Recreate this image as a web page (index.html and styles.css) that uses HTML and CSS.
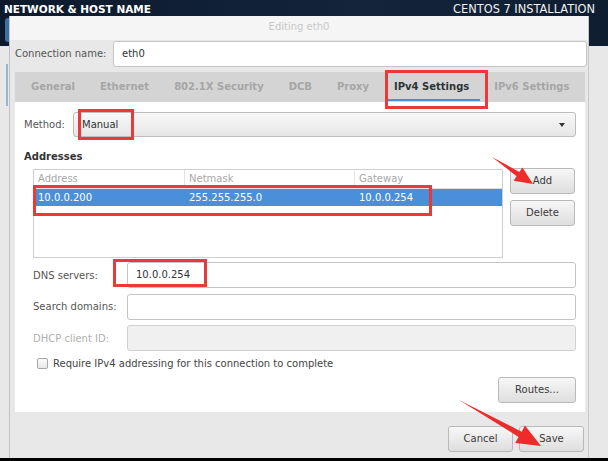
FILE: index.html
```html
<!DOCTYPE html>
<html lang="en">
<head>
    <meta charset="UTF-8">
    <title>Network &amp; Host Name - Editing eth0</title>
    <link rel="stylesheet" href="styles.css">
</head>
<body>
    <header class="topbar">
        <div class="spoke-title">NETWORK &amp; HOST NAME</div>
        <div class="product">CENTOS 7 INSTALLATION</div>
    </header>
    <div class="done-btn"></div>
    <div class="side-line"></div>

    <div class="dialog">
        <div class="dlg-title">Editing eth0</div>

        <div class="conn-row">
            <span class="lbl">Connection name:</span>
            <div class="entry">eth0</div>
        </div>

        <div class="tabs">
            <span class="tab">General</span>
            <span class="tab">Ethernet</span>
            <span class="tab">802.1X Security</span>
            <span class="tab">DCB</span>
            <span class="tab">Proxy</span>
            <span class="tab active">IPv4 Settings</span>
            <span class="tab">IPv6 Settings</span>
        </div>

        <div class="page">
            <div class="method-row">
                <span class="lbl">Method:</span>
                <div class="combo">
                    <span>Manual</span>
                    <span class="caret"></span>
                </div>
            </div>

            <div class="section-title">Addresses</div>
            <div class="addr-block">
                <div class="addr-table">
                    <div class="row head">
                        <span>Address</span><span>Netmask</span><span>Gateway</span>
                    </div>
                    <div class="row selected">
                        <span>10.0.0.200</span><span>255.255.255.0</span><span>10.0.0.254</span>
                    </div>
                </div>
                <div class="addr-buttons">
                    <div class="btn">Add</div>
                    <div class="btn">Delete</div>
                </div>
            </div>

            <div class="fields">
                <span class="lbl">DNS servers:</span>
                <div class="entry">10.0.0.254</div>
                <span class="lbl">Search domains:</span>
                <div class="entry"></div>
                <span class="lbl dim">DHCP client ID:</span>
                <div class="entry disabled"></div>
            </div>

            <div class="check-row">
                <span class="checkbox"></span>
                <span>Require IPv4 addressing for this connection to complete</span>
            </div>

            <div class="routes-row">
                <div class="btn routes">Routes...</div>
            </div>
        </div>

        <div class="actions">
            <div class="btn">Cancel</div>
            <div class="btn">Save</div>
        </div>
    </div>

    <div class="bottom-bar"></div>

    <!-- annotations drawn on top of the screenshot -->
    <div class="mark mark-tab"></div>
    <div class="mark mark-method"></div>
    <div class="mark mark-row"></div>
    <div class="mark mark-dns"></div>
    <svg class="arrows" width="608" height="461" viewBox="0 0 608 461">
        <polygon points="492,157 519.4,172 522.4,167.4 533,184 513.6,180.8 516.6,176.2" fill="#ee2b2b"/>
        <polygon points="459,400 521.6,431.7 525,425.6 541,446 515.2,443 518.6,436.9" fill="#ee2b2b"/>
    </svg>
</body>
</html>
```

FILE: styles.css
```css
body {
    margin: 0;
    width: 608px;
    height: 461px;
    position: relative;
    overflow: hidden;
    background: #e8e8e8;
    font-family: 'DejaVu Sans', sans-serif;
    font-size: 10px;
    color: #333;
}
.topbar {
    height: 46px;
    display: flex;
    justify-content: space-between;
    align-items: flex-start;
    padding: 3px 13px 0 4px;
    box-sizing: border-box;
    background: linear-gradient(to right, #0d1a2c, #13243b 60%, #0f1d31);
    color: #fff;
}
.spoke-title {
    font-weight: bold;
    font-size: 10.5px;
    line-height: 13px;
}
.product {
    font-size: 11.4px;
    line-height: 13px;
    color: #f2f2f2;
}
.done-btn {
    position: absolute;
    left: 5px;
    top: 18px;
    width: 8px;
    height: 24px;
    background: #3d6fa8;
    border-radius: 3px 0 0 3px;
}
.side-line {
    position: absolute;
    left: 6px;
    top: 64px;
    width: 2px;
    height: 42px;
    background: #9fb4cc;
}

/* dialog window */
.dialog {
    position: absolute;
    left: 9px;
    top: 16px;
    width: 580px;
    height: 442px;
    box-sizing: border-box;
    padding: 0 3px 0 5px;
    background: #e8e8e8;
    border-left: 1px solid #c2c2c2;
    border-right: 1px solid #c8c8c8;
    display: flex;
    flex-direction: column;
}
.dlg-title {
    height: 24px;
    margin: 0 -3px 0 -5px;
    background: #f5f5f5;
    color: #c8c8c8;
    text-align: center;
    line-height: 22px;
}
.lbl {
    color: #555;
}
.lbl.dim {
    color: #b0b0b0;
}
.conn-row {
    display: grid;
    grid-template-columns: 98px 1fr;
    align-items: center;
    height: 32px;
    margin-right: -2px;
    padding-bottom: 5px;
    box-sizing: border-box;
}
.entry {
    height: 26px;
    box-sizing: border-box;
    border: 1px solid #c4c4c4;
    border-radius: 3px;
    background: #fff;
    padding: 0 8px;
    line-height: 24px;
    color: #2e3436;
}
.entry.disabled {
    background: #f0f0f0;
    border-color: #d0d0d0;
}

/* notebook tabs */
.tabs {
    height: 30px;
    display: flex;
    padding-left: 3.5px;
    background: #d4d4d4;
}
.tab {
    padding: 0 12.5px;
    line-height: 30px;
    font-weight: bold;
    color: #a6a6a6;
}
.tab.active {
    color: #2e3436;
    background: linear-gradient(#4a90d9, #4a90d9) 6px 27px / calc(100% - 8px) 2px no-repeat;
}

/* ipv4 page */
.page {
    height: 310px;
    background: #fff;
    padding: 10px 9px 0 9px;
    box-sizing: border-box;
}
.method-row {
    display: flex;
    align-items: center;
}
.method-row .lbl {
    width: 49px;
}
.combo {
    flex: 1;
    height: 25px;
    box-sizing: border-box;
    border: 1px solid #bdbdbd;
    border-radius: 3px;
    background: linear-gradient(#f8f8f8, #e6e6e6);
    display: flex;
    align-items: center;
    justify-content: space-between;
    padding: 0 10px 0 8px;
    color: #2e3436;
}
.caret {
    width: 0;
    height: 0;
    border-left: 3.5px solid transparent;
    border-right: 3.5px solid transparent;
    border-top: 4px solid #333;
}
.section-title {
    font-weight: bold;
    color: #333;
    margin: 14px 0 6px;
    line-height: 12px;
}
.addr-block {
    display: flex;
    gap: 7px;
    padding-left: 9px;
}
.addr-table {
    width: 470px;
    height: 89px;
    box-sizing: border-box;
    border: 1px solid #cfcfcf;
    background: #fff;
}
.row {
    display: grid;
    grid-template-columns: 150px 170px 1fr;
}
.row span {
    padding-left: 4px;
}
.row.head {
    height: 18px;
    line-height: 17px;
    color: #a8a8a8;
    border-bottom: 1px solid #e0e0e0;
}
.row.head span + span {
    border-left: 1px solid #e4e4e4;
}
.row.selected {
    height: 17px;
    line-height: 17px;
    background: #4a8fd9;
    color: #fff;
}
.row.selected span + span {
    padding-left: 5px;
}
.addr-buttons {
    display: flex;
    flex-direction: column;
    gap: 6px;
    margin-top: -1px;
}
.btn {
    width: 65px;
    height: 26px;
    box-sizing: border-box;
    border: 1px solid #b9b9b9;
    border-radius: 3px;
    background: linear-gradient(#f7f7f7, #dedede);
    text-align: center;
    line-height: 24px;
    color: #3a3a3a;
}
.fields {
    display: grid;
    grid-template-columns: 94px 1fr;
    row-gap: 5.5px;
    align-items: center;
    padding-left: 9px;
    margin-top: 4px;
}
.check-row {
    display: flex;
    align-items: center;
    gap: 5px;
    margin: 7px 0 0 13px;
    color: #444;
}
.checkbox {
    width: 11px;
    height: 11px;
    box-sizing: border-box;
    border: 1px solid #a8a8a8;
    border-radius: 2px;
    background: linear-gradient(#fbfbfb, #e8e8e8);
}
.routes-row {
    display: flex;
    justify-content: flex-end;
    margin-top: 8px;
}
.btn.routes {
    width: 78px;
}
.actions {
    display: flex;
    justify-content: flex-end;
    gap: 6px;
    padding: 14px 1px 0 0;
}

.bottom-bar {
    position: absolute;
    left: 0;
    right: 0;
    bottom: 0;
    height: 3px;
    background: #000;
}

/* red annotation boxes */
.mark {
    position: absolute;
    border: 3px solid #e8393b;
    box-sizing: border-box;
}
.mark-tab {
    left: 385px;
    top: 70px;
    width: 103px;
    height: 39px;
}
.mark-method {
    left: 78px;
    top: 109px;
    width: 56px;
    height: 31px;
}
.mark-row {
    left: 33px;
    top: 185px;
    width: 399px;
    height: 31px;
}
.mark-dns {
    left: 113px;
    top: 259px;
    width: 94px;
    height: 28px;
}
.arrows {
    position: absolute;
    left: 0;
    top: 0;
}
```
